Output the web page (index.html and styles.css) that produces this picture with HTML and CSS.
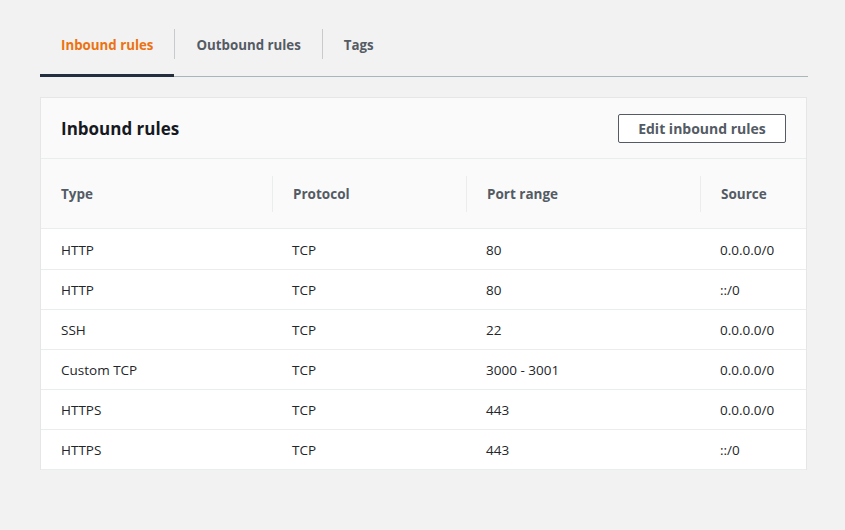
FILE: index.html
```html
<!DOCTYPE html>
<html>
<head>
<meta charset="utf-8">
<link rel="stylesheet" href="styles.css">
</head>
<body>
<div class="page">
  <div class="tabs">
    <div class="tab active">Inbound rules</div>
    <div class="sep"></div>
    <div class="tab">Outbound rules</div>
    <div class="sep"></div>
    <div class="tab">Tags</div>
  </div>
  <div class="panel">
    <div class="panel-head">
      <h2 class="title">Inbound rules</h2>
      <button class="btn">Edit inbound rules</button>
    </div>
    <div class="table">
      <div class="row head">
        <div class="cell">Type</div>
        <div class="cell sepcell">Protocol</div>
        <div class="cell sepcell">Port range</div>
        <div class="cell sepcell">Source</div>
      </div>
      <div class="row first"><div class="cell">HTTP</div><div class="cell">TCP</div><div class="cell">80</div><div class="cell">0.0.0.0/0</div></div>
      <div class="row"><div class="cell">HTTP</div><div class="cell">TCP</div><div class="cell">80</div><div class="cell">::/0</div></div>
      <div class="row"><div class="cell">SSH</div><div class="cell">TCP</div><div class="cell">22</div><div class="cell">0.0.0.0/0</div></div>
      <div class="row"><div class="cell">Custom TCP</div><div class="cell">TCP</div><div class="cell">3000 - 3001</div><div class="cell">0.0.0.0/0</div></div>
      <div class="row"><div class="cell">HTTPS</div><div class="cell">TCP</div><div class="cell">443</div><div class="cell">0.0.0.0/0</div></div>
      <div class="row"><div class="cell">HTTPS</div><div class="cell">TCP</div><div class="cell">443</div><div class="cell">::/0</div></div>
    </div>
  </div>
</div>
</body>
</html>
```

FILE: styles.css
```css
html, body {
  margin: 0;
  padding: 0;
  background: #f2f2f2;
  font-family: "Open Sans", "Noto Sans", sans-serif;
  color: #16191f;
}
.page {
  width: 845px;
  height: 530px;
  padding: 14px 37px 0 40px;
  box-sizing: border-box;
}
.tabs {
  display: flex;
  align-items: center;
  height: 62px;
  border-bottom: 1px solid #aab7b8;
}
.tab {
  height: 62px;
  box-sizing: border-box;
  padding: 0 21px 2px 21px;
  display: flex;
  align-items: center;
  font-size: 13.3px;
  font-weight: 700;
  color: #545b64;
  margin-bottom: -1px;
}
.tab.active {
  color: #ec7211;
  border-bottom: 3px solid #232f3e;
  padding-top: 2px;
  padding-bottom: 0;
  height: 63px;
}
.sep {
  width: 1px;
  height: 30px;
  margin-bottom: 2px;
  background: #c6cbcc;
}
.panel {
  margin-top: 20px;
  margin-right: 1px;
  background: #fff;
  border: 1px solid #e5e6e6;
  border-bottom: none;
  height: 373px;
  box-sizing: border-box;
  overflow: hidden;
}
.panel-head {
  height: 60px;
  background: #fafafa;
  border-bottom: 1px solid #eaeded;
  display: flex;
  align-items: center;
  justify-content: space-between;
  padding: 0 20px 0 20px;
}
.title {
  margin: 0;
  font-size: 17px;
  font-weight: 700;
  color: #16191f;
}
.btn {
  font-family: inherit;
  height: 29px;
  width: 168px;
  background: #fff;
  border: 1px solid #545b64;
  border-radius: 2px;
  font-size: 14px;
  font-weight: 700;
  color: #545b64;
  padding: 0;
}
.row {
  display: grid;
  grid-template-columns: 231px 194px 234px 1fr;
  height: 40px;
  box-sizing: border-box;
  border-bottom: 1px solid #eaeded;
  align-items: center;
  font-size: 13.5px;
  color: #232629;
}
.row.first {
  height: 41px;
  padding-top: 1px;
}
.row.head {
  height: 70px;
  background: #fafafa;
  font-weight: 700;
  color: #545b64;
}
.cell {
  padding-left: 20px;
  white-space: nowrap;
}
.sepcell {
  border-left: 1px solid #eaeded;
  height: 36px;
  display: flex;
  align-items: center;
}
```
